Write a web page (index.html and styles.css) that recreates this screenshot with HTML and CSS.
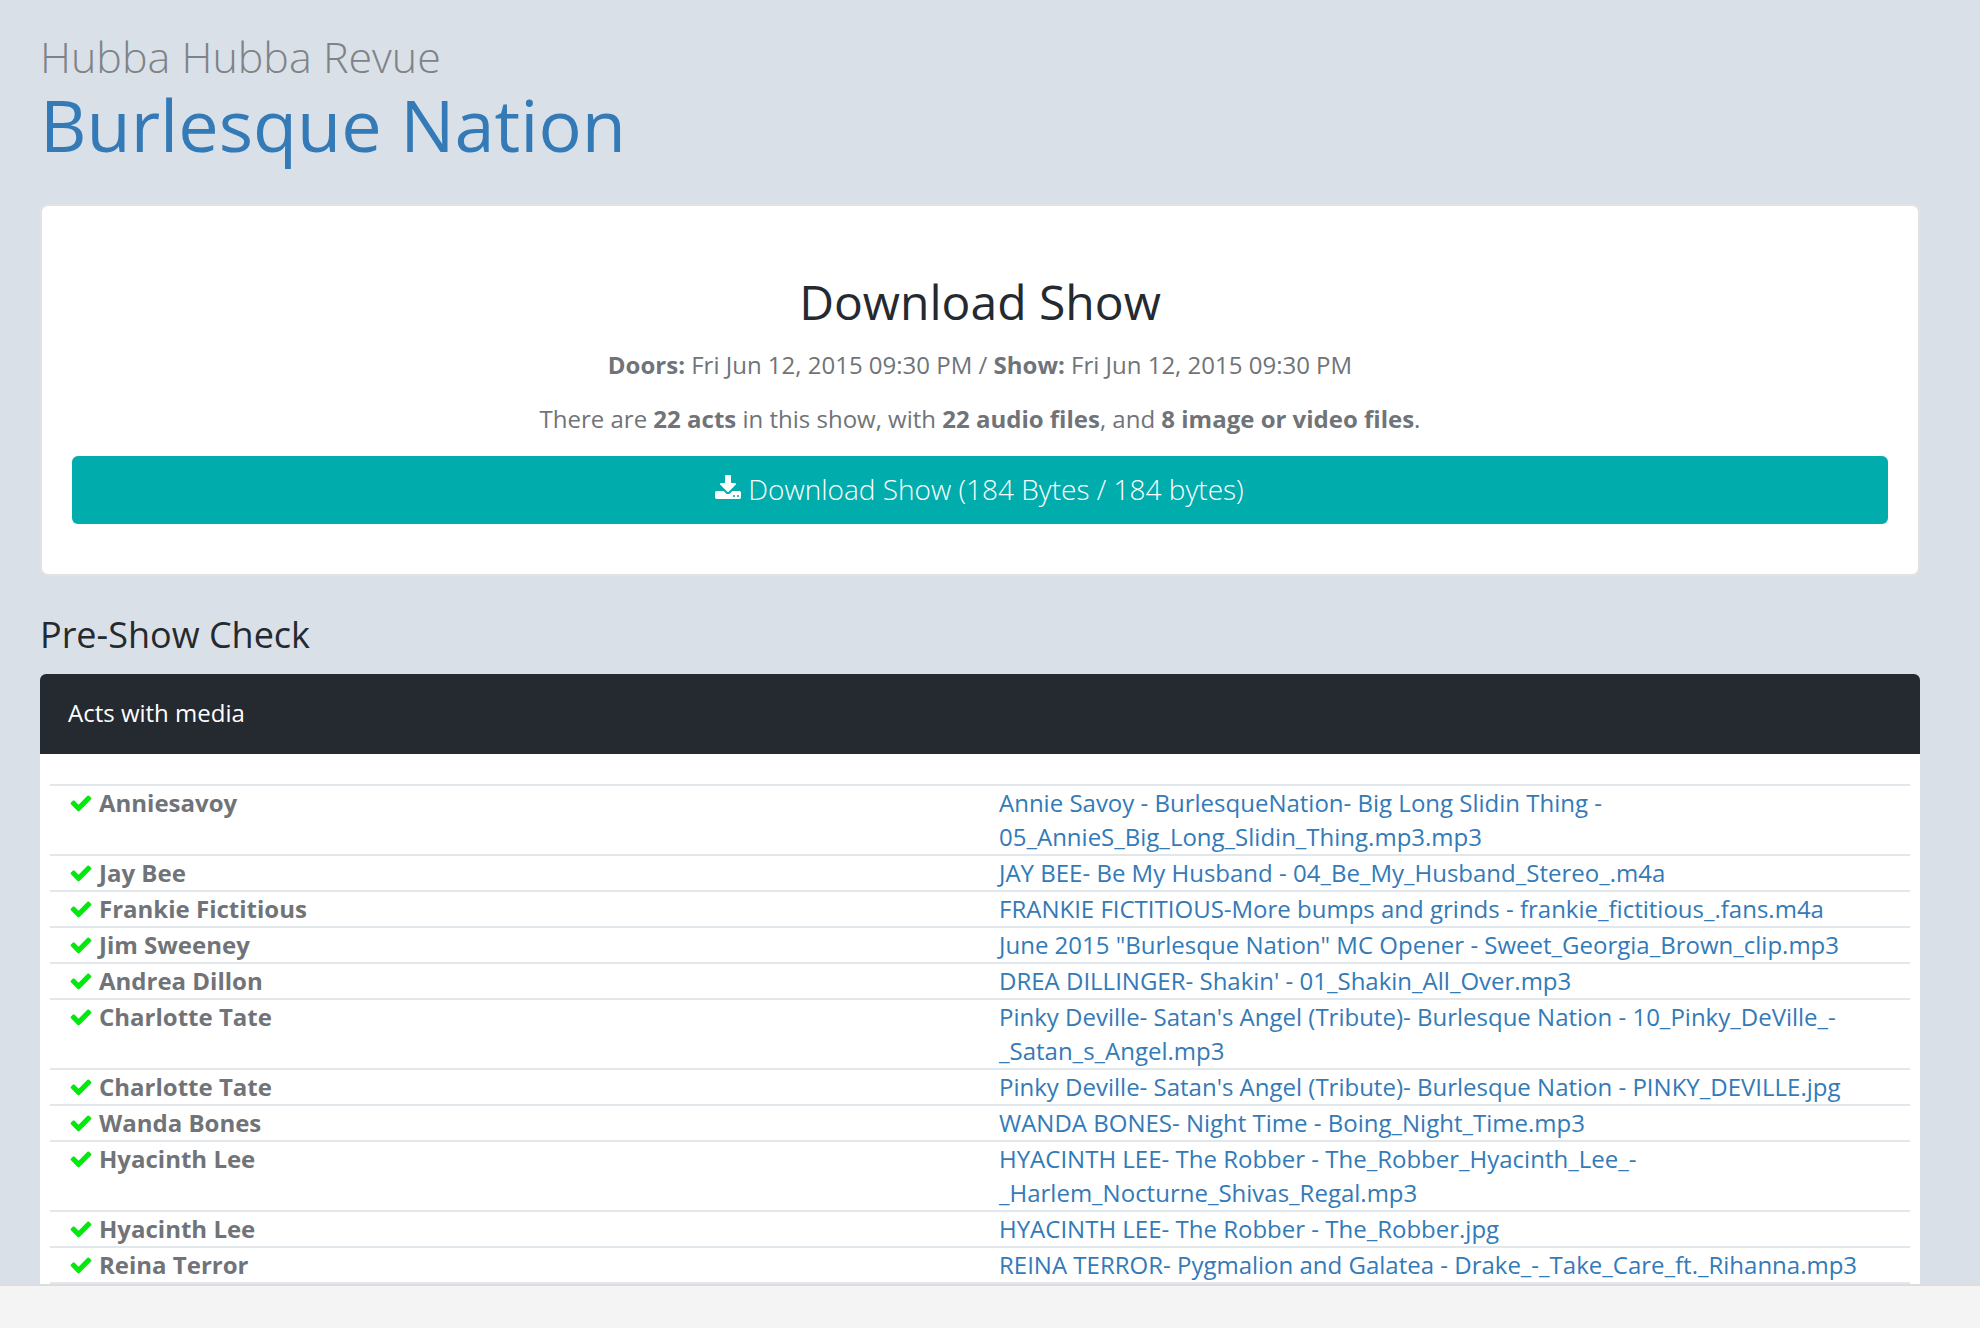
FILE: index.html
```html
<!DOCTYPE html>
<html lang="en">
<head>
<meta charset="utf-8">
<meta name="viewport" content="width=device-width, initial-scale=1">
<title>Burlesque Nation - Hubba Hubba Revue</title>
<link rel="stylesheet" href="styles.css">
</head>
<body>
<svg class="sprite" aria-hidden="true">
  <symbol id="check" viewBox="0 0 1792 1792"><path d="M1671 566q0 40-28 68l-724 724-136 136q-28 28-68 28t-68-28l-136-136-362-362q-28-28-28-68t28-68l136-136q28-28 68-28t68 28l294 295 656-657q28-28 68-28t68 28l136 136q28 28 28 68z"/></symbol>
  <symbol id="download" viewBox="0 0 1792 1792"><path d="M1344 1344q0-26-19-45t-45-19-45 19-19 45 19 45 45 19 45-19 19-45zm256 0q0-26-19-45t-45-19-45 19-19 45 19 45 45 19 45-19 19-45zm128-224v320q0 40-28 68t-68 28h-1472q-40 0-68-28t-28-68v-320q0-40 28-68t68-28h465l135 136q58 56 136 56t136-56l136-136h464q40 0 68 28t28 68zm-325-569q17 41-14 70l-448 448q-18 19-45 19t-45-19l-448-448q-31-29-14-70 17-39 59-39h256v-448q0-26 19-45t45-19h256q26 0 45 19t19 45v448h256q42 0 59 39z"/></symbol>
</svg>
<main class="page">
  <header class="page-header">
    <p class="producer">Hubba Hubba Revue</p>
    <h1 class="show-title"><a href="#">Burlesque Nation</a></h1>
  </header>

  <section class="card">
    <h2 class="card-title">Download Show</h2>
    <p class="card-text"><strong>Doors:</strong> Fri Jun 12, 2015 09:30 PM / <strong>Show:</strong> Fri Jun 12, 2015 09:30 PM</p>
    <p class="card-text">There are <strong>22 acts</strong> in this show, with <strong>22 audio files</strong>, and <strong>8 image or video files</strong>.</p>
    <button class="download" type="button"><svg class="download-icon" aria-hidden="true"><use href="#download"/></svg><span>Download Show (184 Bytes / 184 bytes)</span></button>
  </section>

  <h3 class="section-title">Pre-Show Check</h3>
  <section class="panel">
    <h4 class="panel-header">Acts with media</h4>
    <div class="panel-body">
      <table class="acts">
        <tbody>
          <tr><th scope="row"><div class="act"><svg class="check" aria-hidden="true"><use href="#check"/></svg>Anniesavoy</div></th><td><a href="#">Annie Savoy - BurlesqueNation- Big Long Slidin Thing - 05_AnnieS_Big_Long_Slidin_Thing.mp3.mp3</a></td></tr>
          <tr><th scope="row"><div class="act"><svg class="check" aria-hidden="true"><use href="#check"/></svg>Jay Bee</div></th><td><a href="#">JAY BEE- Be My Husband - 04_Be_My_Husband_Stereo_.m4a</a></td></tr>
          <tr><th scope="row"><div class="act"><svg class="check" aria-hidden="true"><use href="#check"/></svg>Frankie Fictitious</div></th><td><a href="#">FRANKIE FICTITIOUS-More bumps and grinds - frankie_fictitious_.fans.m4a</a></td></tr>
          <tr><th scope="row"><div class="act"><svg class="check" aria-hidden="true"><use href="#check"/></svg>Jim Sweeney</div></th><td><a href="#">June 2015 "Burlesque Nation" MC Opener - Sweet_Georgia_Brown_clip.mp3</a></td></tr>
          <tr><th scope="row"><div class="act"><svg class="check" aria-hidden="true"><use href="#check"/></svg>Andrea Dillon</div></th><td><a href="#">DREA DILLINGER- Shakin' - 01_Shakin_All_Over.mp3</a></td></tr>
          <tr><th scope="row"><div class="act"><svg class="check" aria-hidden="true"><use href="#check"/></svg>Charlotte Tate</div></th><td><a href="#">Pinky Deville- Satan's Angel (Tribute)- Burlesque Nation - 10_Pinky_DeVille_-_Satan_s_Angel.mp3</a></td></tr>
          <tr><th scope="row"><div class="act"><svg class="check" aria-hidden="true"><use href="#check"/></svg>Charlotte Tate</div></th><td><a href="#">Pinky Deville- Satan's Angel (Tribute)- Burlesque Nation - PINKY_DEVILLE.jpg</a></td></tr>
          <tr><th scope="row"><div class="act"><svg class="check" aria-hidden="true"><use href="#check"/></svg>Wanda Bones</div></th><td><a href="#">WANDA BONES- Night Time - Boing_Night_Time.mp3</a></td></tr>
          <tr><th scope="row"><div class="act"><svg class="check" aria-hidden="true"><use href="#check"/></svg>Hyacinth Lee</div></th><td><a href="#">HYACINTH LEE- The Robber - The_Robber_Hyacinth_Lee_-_Harlem_Nocturne_Shivas_Regal.mp3</a></td></tr>
          <tr><th scope="row"><div class="act"><svg class="check" aria-hidden="true"><use href="#check"/></svg>Hyacinth Lee</div></th><td><a href="#">HYACINTH LEE- The Robber - The_Robber.jpg</a></td></tr>
          <tr><th scope="row"><div class="act"><svg class="check" aria-hidden="true"><use href="#check"/></svg>Reina Terror</div></th><td><a href="#">REINA TERROR- Pygmalion and Galatea - Drake_-_Take_Care_ft._Rihanna.mp3</a></td></tr>
        </tbody>
      </table>
    </div>
  </section>
</main>
<footer class="footer"></footer>
</body>
</html>
```
FILE: styles.css
```css
* {
  box-sizing: border-box;
}

body {
  margin: 0;
  height: 100vh;
  display: flex;
  flex-direction: column;
  background: #d9e0e7;
  color: #707478;
  font: 24px/34px "Open Sans", sans-serif;
}

h1, h2, h3, h4, p {
  margin: 0;
  font-weight: 400;
}

a {
  color: #337ab7;
  text-decoration: none;
}

.sprite {
  display: none;
}

.page {
  flex: 1;
  min-height: 0;
  overflow: hidden;
  padding: 32px 60px 0 40px;
}

.page-header {
  margin-bottom: 38px;
}

.producer {
  color: #7f8387;
  font-size: 43px;
  font-weight: 300;
  line-height: 50px;
}

.show-title {
  font-size: 72px;
  line-height: 84px;
}

.show-title a {
  display: block;
}

.card {
  padding: 68px 30px 50px;
  border: 2px solid #e2e2e2;
  border-radius: 8px;
  background: #fff;
  text-align: center;
}

.card-title {
  margin-bottom: 18px;
  color: #242a30;
  font-size: 48px;
  line-height: 56px;
}

.card-text {
  margin-bottom: 20px;
}

.download {
  display: flex;
  justify-content: center;
  align-items: center;
  gap: 6px;
  width: 100%;
  height: 68px;
  padding: 0 2px 2px 0;
  border: 0;
  border-radius: 6px;
  background: #00acac;
  color: #fff;
  font-family: inherit;
  font-size: 28px;
  font-weight: 300;
}

.download-icon {
  width: 28px;
  height: 28px;
  fill: currentColor;
}

.section-title {
  margin: 38px 0 18px;
  color: #242a30;
  font-size: 36px;
  line-height: 42px;
}

.panel {
  border-radius: 6px;
  background: #fff;
  overflow: hidden;
}

.panel-header {
  padding: 22px 28px 24px;
  background: #242a30;
  color: #fff;
  font-weight: 500;
}

.panel-body {
  padding: 30px 10px;
}

.acts {
  width: 100%;
  table-layout: fixed;
  border-spacing: 0;
  border-bottom: 2px solid #e2e7eb;
}

.acts th,
.acts td {
  width: 50%;
  padding: 0 19px;
  border-top: 2px solid #e2e7eb;
  text-align: left;
  vertical-align: top;
}

.act {
  display: flex;
  align-items: center;
  gap: 6px;
}

.check {
  width: 24px;
  height: 24px;
  fill: #00eb0c;
}

.footer {
  flex: none;
  height: 44px;
  border-top: 2px solid #dddddf;
  background: #f4f4f4;
}
```
